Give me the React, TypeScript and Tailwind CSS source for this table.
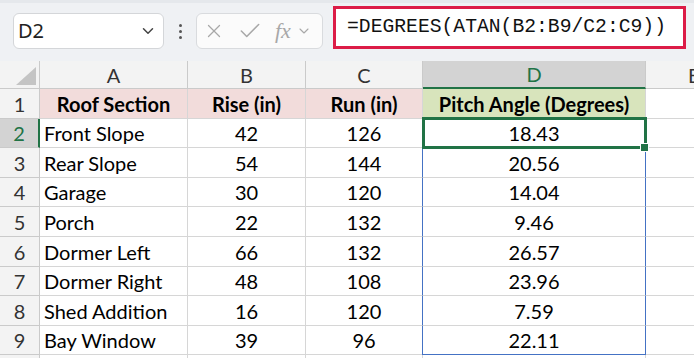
import { ChevronDown, X, Check } from "lucide-react";

type Row = { section: string; rise: number; run: number; angle: string };

const rows: Row[] = [
  { section: "Front Slope", rise: 42, run: 126, angle: "18.43" },
  { section: "Rear Slope", rise: 54, run: 144, angle: "20.56" },
  { section: "Garage", rise: 30, run: 120, angle: "14.04" },
  { section: "Porch", rise: 22, run: 132, angle: "9.46" },
  { section: "Dormer Left", rise: 66, run: 132, angle: "26.57" },
  { section: "Dormer Right", rise: 48, run: 108, angle: "23.96" },
  { section: "Shed Addition", rise: 16, run: 120, angle: "7.59" },
  { section: "Bay Window", rise: 39, run: 96, angle: "22.11" },
];

const font = { fontFamily: "Lato, 'Noto Sans', sans-serif" };

const cell = "border-r border-b border-[#d6d6d6] flex items-center overflow-hidden whitespace-nowrap";
const head = "border-r border-b border-[#cacaca] bg-[#f3f3f3] flex items-center justify-center text-[#333]";

export default function App() {
  return (
    <div className="w-[694px] h-[358px] overflow-hidden bg-white text-[20px] text-black" style={font}>
      {/* formula bar */}
      <div className="h-[61px] bg-[#eff1f4] border-t-[3px] border-[#e5e8ec]">
        <div className="flex items-start pt-[10px]">
          <div className="ml-[13px] w-[151px] h-[36px] bg-white border border-[#d4d6d9] rounded-[6px] flex items-center pl-[4px] pr-[6px]">
            <span className="flex-1 text-[20px] text-[#222]" style={{ fontFamily: "'Noto Sans', sans-serif" }}>D2</span>
            <ChevronDown size={18} strokeWidth={2} className="text-[#444]" />
          </div>
          <div className="w-[32px] h-[36px] flex flex-col items-center justify-center gap-[3px]">
            <span className="w-[3px] h-[3px] rounded-full bg-[#555]" />
            <span className="w-[3px] h-[3px] rounded-full bg-[#555]" />
            <span className="w-[3px] h-[3px] rounded-full bg-[#555]" />
          </div>
          <div className="w-[127px] h-[36px] bg-[#fbfbfb] border border-[#d9dbde] rounded-[6px] flex items-center pl-[6px] text-[#a8a8a8]">
            <X size={22} strokeWidth={1.4} />
            <Check size={26} strokeWidth={1.4} className="ml-[12px]" />
            <span className="ml-[12px] text-[22px] italic leading-none" style={{ fontFamily: "'Liberation Serif', serif" }}>fx</span>
            <ChevronDown size={16} strokeWidth={1.6} className="ml-[5px]" />
          </div>
          <div className="ml-[10px] -mt-[7px] w-[353px] h-[43px] bg-white border-[3px] border-[#dc1c47] flex items-center pl-[11px]">
            <span className="text-[19.7px] text-[#111]" style={{ fontFamily: "'Liberation Mono', monospace" }}>
              =DEGREES(ATAN(B2:B9/C2:C9))
            </span>
          </div>
        </div>
      </div>

      {/* sheet grid */}
      <div className="grid grid-cols-[40px_148px_118px_117px_223px_100px] grid-rows-[28px_30px_29px_30px_29px_30px_30px_29px_30px_29px_30px]">
        {/* column headers */}
        <div className={head + " relative"}>
          <svg width="20" height="18" viewBox="0 0 20 18" className="absolute left-[16px] top-[6px]">
            <polygon points="20,0 20,18 0,18" fill="#c4c4c4" />
          </svg>
        </div>
        <div className={head}>A</div>
        <div className={head}>B</div>
        <div className={head}>C</div>
        <div className="border-r border-[#cacaca] border-b-2 border-b-[#217346] bg-[#d3d3d3] flex items-center justify-center text-[#217346]">D</div>
        <div className={head + " justify-start pl-[42px]"}>E</div>

        {/* header row 1 */}
        <div className={head}>1</div>
        <div className={cell + " bg-[#f2dcdb] justify-center font-bold"}>Roof Section</div>
        <div className={cell + " bg-[#f2dcdb] justify-center font-bold"}>Rise (in)</div>
        <div className={cell + " bg-[#f2dcdb] justify-center font-bold"}>Run (in)</div>
        <div className={cell + " bg-[#d8e4bc] justify-center font-bold"}>Pitch Angle (Degrees)</div>
        <div className={cell}></div>

        {rows.map((r, i) => {
          const n = i + 2;
          const selected = n === 2;
          const last = n === 9;
          return (
            <div key={n} className="contents">
              <div
                className={
                  selected
                    ? "border-b border-[#cacaca] border-r-2 border-r-[#217346] bg-[#d3d3d3] flex items-center justify-center text-[#217346]"
                    : head
                }
              >
                {n}
              </div>
              <div className={cell + " pl-[4px]"}>{r.section}</div>
              <div className={cell + " justify-center"}>{r.rise}</div>
              <div className={cell + " justify-center"}>{r.run}</div>
              {selected ? (
                <div className={cell + " justify-center relative overflow-visible"}>
                  {r.angle}
                  <div className="absolute left-[-1px] right-[-2px] top-[-2px] bottom-[-2px] border-[3px] border-[#217346] z-20 pointer-events-none" />
                  <div className="absolute right-[-4px] bottom-[-5px] w-[9px] h-[9px] bg-[#217346] border border-white z-30" />
                </div>
              ) : (
                <div
                  className={
                    "border-l border-l-[#4472c4] border-r border-r-[#4472c4] border-b flex items-center justify-center whitespace-nowrap -ml-px " +
                    (last ? "border-b-[#4472c4]" : "border-b-[#d6d6d6]")
                  }
                >
                  {r.angle}
                </div>
              )}
              <div className={cell}></div>
            </div>
          );
        })}

        {/* row 10 peek */}
        <div className={head}></div>
        <div className={cell}></div>
        <div className={cell}></div>
        <div className={cell}></div>
        <div className={cell}></div>
        <div className={cell}></div>
      </div>
    </div>
  );
}
